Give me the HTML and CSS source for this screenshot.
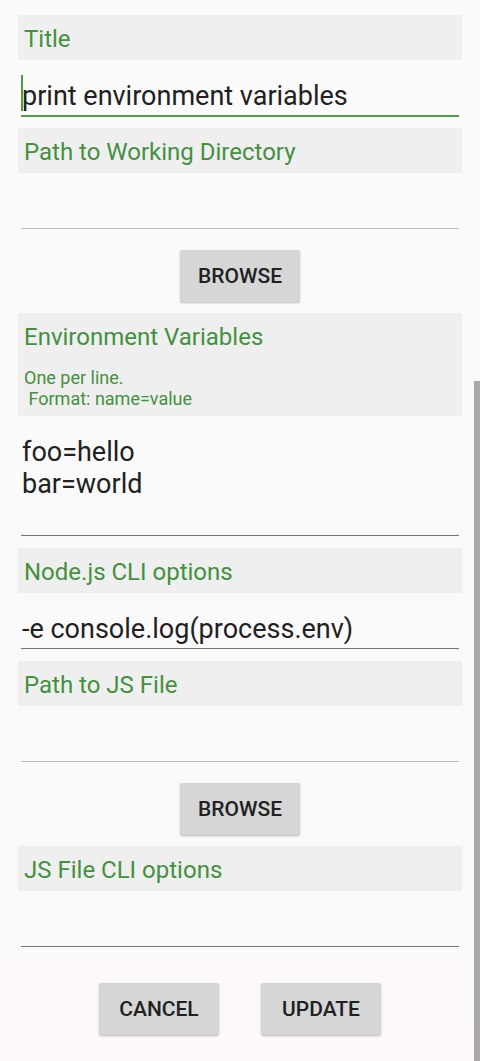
FILE: index.html
```html
<!DOCTYPE html>
<html>
<head>
<meta charset="utf-8">
<link rel="stylesheet" href="styles.css">
</head>
<body>
<div class="form">
  <div class="label">Title</div>
  <div class="field focused"><span class="caret"></span>print environment variables</div>

  <div class="label gap-focus">Path to Working Directory</div>
  <div class="field empty"></div>
  <div class="btn-row single"><div class="btn">BROWSE</div></div>

  <div class="label tall gap-btn">
    <div>Environment Variables</div>
    <div class="hint">One per line.<br>&nbsp;Format: name=value</div>
  </div>
  <div class="field area">foo=hello<br>bar=world</div>

  <div class="label gap">Node.js CLI options</div>
  <div class="field">-e console.log(process.env)</div>

  <div class="label gap">Path to JS File</div>
  <div class="field empty"></div>
  <div class="btn-row single"><div class="btn">BROWSE</div></div>

  <div class="label gap-btn">JS File CLI options</div>
  <div class="field"></div>

  <div class="btn-row actions">
    <div class="btn">CANCEL</div>
    <div class="btn">UPDATE</div>
  </div>
</div>
<div class="scrollbar"></div>
</body>
</html>
```

FILE: styles.css
```css
html, body {
  margin: 0;
  padding: 0;
}
body {
  width: 480px;
  height: 1061px;
  overflow: hidden;
  background: linear-gradient(to bottom, #fafafa 0%, #fafafa 40%, #fcf8fc 100%);
  font-family: Roboto, "Liberation Sans", sans-serif;
  position: relative;
}
.form {
  display: flex;
  flex-direction: column;
  padding: 15px 18px 0 18px;
}
.label {
  background: #efefef;
  color: #43913e;
  font-size: 24px;
  line-height: 28px;
  padding: 10px 6px 7px 6px;
  height: 28px;
}
.label.tall {
  height: auto;
}
.label .hint {
  font-size: 18px;
  line-height: 21px;
  margin-top: 16px;
}
.gap-focus { margin-top: 11px; }
.gap { margin-top: 12px; }
.gap-btn { margin-top: 11px; }
.field {
  position: relative;
  margin: 0 3px;
  padding: 20px 0 3px 1px;
  font-size: 27px;
  line-height: 32px;
  min-height: 32px;
  color: #212121;
  border-bottom: 1px solid #757575;
  white-space: nowrap;
}
.field.focused {
  border-bottom: 2px solid #4c9f47;
}
.field.empty {
  border-bottom-color: #bdbdbd;
}
.field.area {
  min-height: 96px;
}
.caret {
  position: absolute;
  left: 0;
  top: 15px;
  width: 2px;
  height: 36px;
  background: #4c9f47;
}
.btn-row {
  display: flex;
  justify-content: center;
}
.btn-row.single {
  margin-top: 21px;
}
.btn-row.actions {
  margin-top: 36px;
  gap: 42px;
}
.btn {
  width: 120px;
  height: 52px;
  background: #d6d6d7;
  border-radius: 2px;
  box-shadow: 0 1px 2px rgba(0,0,0,0.25);
  color: #212121;
  font-size: 21px;
  font-weight: 500;
  display: flex;
  align-items: center;
  justify-content: center;
}
.scrollbar {
  position: absolute;
  right: 0;
  top: 381px;
  width: 6px;
  bottom: 0;
  background: #a8a8a8;
}
```
